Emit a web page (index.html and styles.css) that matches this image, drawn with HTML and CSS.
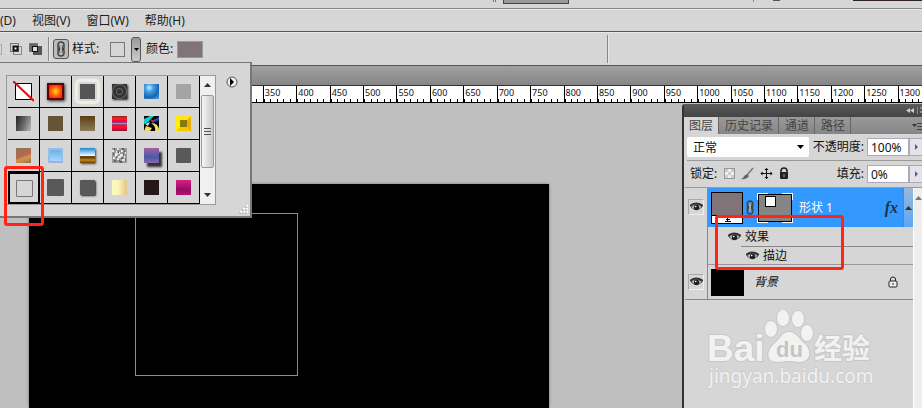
FILE: index.html
```html
<!DOCTYPE html>
<html lang="zh-CN">
<head>
  <meta charset="UTF-8">
  <meta name="viewport" content="width=device-width, initial-scale=1.0">
  <title>图层样式</title>
  <link rel="stylesheet" href="styles.css">
</head>
<body>
  <!-- shared icons -->
  <svg class="defs" aria-hidden="true">
    <symbol id="eye" viewBox="0 0 13 10">
      <path d="M1 5Q6 0 12 5Q6 10 1 5Z" fill="#ddd" stroke="#555"/>
      <path d="M0 4Q6-1 13 4" fill="none" stroke="#333" stroke-width="2"/>
      <circle cx="6.500" cy="5.500" r="2.800" fill="#222"/>
      <circle cx="5.700" cy="4.500" r=".8" fill="#fff"/>
    </symbol>
    <symbol id="chain" viewBox="0 0 8 16">
      <rect x="1" y="1" width="6" height="8" rx="3" fill="none" stroke="#444" stroke-width="1.500"/>
      <rect x="1" y="7" width="6" height="8" rx="3" fill="none" stroke="#444" stroke-width="1.500"/>
      <path d="M4 4v8" stroke="#333" stroke-width="3"/>
      <path d="M4 4v8" stroke="#ddd" stroke-width="1.500"/>
    </symbol>
  </svg>

  <header class="app-bar">
    <span class="app-grip"></span>
    <span class="app-tab"></span>
    <span class="app-line"></span>
    <span class="app-dot"></span>
    <span class="app-edge"></span>
  </header>

  <nav class="menu-bar">
    <button type="button">(D)</button>
    <button type="button">视图(V)</button>
    <button type="button">窗口(W)</button>
    <button type="button">帮助(H)</button>
  </nav>

  <div class="options-bar">
    <svg class="path-modes" viewBox="0 0 44 14">
      <path d="M0 2.500H1.500V12.500H0" fill="none" stroke="#aaa"/>
      <rect x="13.500" y="4.500" width="8" height="8" fill="none" stroke="#888"/>
      <rect x="10.500" y="1.500" width="8" height="8" fill="none" stroke="#777"/>
      <rect x="13.500" y="4.500" width="4" height="4" fill="#eee" stroke="#111" stroke-width="2"/>
      <rect x="33" y="4" width="9" height="9" fill="#555"/>
      <rect x="29.500" y="1.500" width="8" height="8" fill="#666" stroke="#777"/>
      <rect x="32.500" y="4.500" width="5" height="5" fill="#ddd" stroke="#111"/>
    </svg>
    <span class="divider"></span>
    <button type="button" class="link-btn" aria-label="链接"><svg width="8" height="16"><use href="#chain"/></svg></button>
    <span class="opt-label">样式:</span>
    <button type="button" class="style-preview" aria-label="样式"></button>
    <button type="button" class="style-arrow" aria-label="打开样式"><svg width="5" height="3"><path d="M0 0h5L2.500 3z"/></svg></button>
    <span class="opt-label">颜色:</span>
    <button type="button" class="color-preview" aria-label="颜色"></button>
    <span class="divider divider-far"></span>
  </div>

  <div class="doc-tabs"></div>
  <div class="ruler" id="ruler"></div>

  <main class="workspace">
    <div class="document"><div class="shape"></div></div>
  </main>

  <section class="style-popup">
    <div class="style-box">
      <div class="style-grid">
        <button type="button" aria-label="无"><svg class="none" viewBox="0 0 21 21"><rect x="2.500" y="2.500" width="16" height="16" fill="#fff" stroke="#000"/><path d="M0 0L21 20" stroke="#d11" stroke-width="2"/></svg></button>
        <button type="button" aria-label="样式"><i class="sw sun"></i></button>
        <button type="button" aria-label="样式"><i class="sw glow"></i></button>
        <button type="button" aria-label="样式"><i class="sw rings"></i></button>
        <button type="button" aria-label="样式"><i class="sw glass"></i></button>
        <button type="button" aria-label="样式"><i class="sw light"></i></button>
        <button type="button" aria-label="样式"><i class="sw smoke"></i></button>
        <button type="button" aria-label="样式"><i class="sw brown"></i></button>
        <button type="button" aria-label="样式"><i class="sw bronze"></i></button>
        <button type="button" aria-label="样式"><i class="sw stripes"></i></button>
        <button type="button" aria-label="样式"><svg class="paint" viewBox="0 0 15 15"><path d="M0 0h15v15H0z"/><path d="M0 3L6 0H10L3 7L0 8Z" fill="#1cc"/><path d="M7 5L15 1V4L9 7Z" fill="#24b"/><path d="M6 3L11 5L8 6Z" fill="#d22"/><path d="M7 7Q15 7 15 15H11Q12 10 7 7ZM2 10L8 12L6 15H0Z" fill="#ed6"/><path d="M1 8L6 6L4 10Z" fill="#cdd"/></svg></button>
        <button type="button" aria-label="样式"><i class="sw gold"></i></button>
        <button type="button" aria-label="样式"><i class="sw copper"></i></button>
        <button type="button" aria-label="样式"><i class="sw sky"></i></button>
        <button type="button" aria-label="样式"><i class="sw chrome"></i></button>
        <button type="button" aria-label="样式"><svg class="paint" viewBox="0 0 15 15"><path d="M0 0h15v15H0z" fill="#999"/><path d="M0 3h2M5 1h2M9 3h2M3 6h3M8 7h3M1 10h2M5 11h2M10 12h3M4 4h1M12 9h1M7 5h1M3 8h2M13 5h1M6 9h4" stroke="#fff" stroke-width="1.500"/><path d="M2 1h1M10 1h2M6 4h1M1 6h1M11 6h1M4 9h1M9 10h2M2 13h2M13 12h1M8 14h2M12 3h1M7 13h1" stroke="#222"/></svg></button>
        <button type="button" aria-label="样式"><i class="sw violet"></i></button>
        <button type="button" aria-label="样式"><i class="sw grey"></i></button>
        <button type="button" aria-label="描边" class="selected"><i class="sw outline"></i></button>
        <button type="button" aria-label="样式"><i class="sw grey big"></i></button>
        <button type="button" aria-label="样式"><i class="sw grey shadow"></i></button>
        <button type="button" aria-label="样式"><i class="sw cream"></i></button>
        <button type="button" aria-label="样式"><i class="sw dark"></i></button>
        <button type="button" aria-label="样式"><i class="sw magenta"></i></button>
      </div>
      <div class="scrollbar">
        <svg width="7" height="4"><path d="M0 4h7L3.500 0z" fill="#333"/></svg>
        <div class="thumb"><i></i><i></i><i></i></div>
        <svg width="7" height="4"><path d="M0 0h7L3.500 4z" fill="#333"/></svg>
      </div>
    </div>
    <button type="button" class="popup-menu" aria-label="菜单"><svg viewBox="0 0 12 12"><circle cx="6" cy="6" r="5" fill="#eee" stroke="#555"/><path d="M4 2l4 4-4 4z"/></svg></button>
    <svg class="resize-grip" viewBox="0 0 9 9"><path d="M7 1h2M4 4h2M7 4h2M1 7h2M4 7h2M7 7h2" stroke="#fff" stroke-width="2"/><path d="M6 2h2M3 5h2M6 5h2M0 8h2M3 8h2M6 8h2" stroke="#aaa"/></svg>
  </section>
  <div class="mark mark-style"></div>

  <aside class="layers-panel">
    <div class="panel-top"><svg width="16" height="7"><path d="M4 1v5L0 3.500zM8 1v5L4 3.500z" fill="#ccc"/><path d="M11.500 0v7" stroke="#888"/><path d="M14 1h2M14 5h2" stroke="#ccc"/></svg></div>
    <div class="panel-tabs">
      <button type="button" class="active">图层</button>
      <button type="button">历史记录</button>
      <button type="button">通道</button>
      <button type="button">路径</button>
      <svg class="tabs-menu" width="10" height="8"><path d="M0 2h5L2.500 5z" fill="#333"/><path d="M5 1.500h5M5 4.500h5M5 7.500h5" stroke="#444"/></svg>
    </div>
    <div class="panel-row blend-row">
      <div class="select-wrap">
        <select aria-label="混合模式"><option>正常</option></select>
        <svg width="7" height="4"><path d="M0 0h7L3.500 4z"/></svg>
      </div>
      <label for="opacity">不透明度:</label>
      <input id="opacity" type="text" value="100%">
      <button type="button" class="step" aria-label="不透明度滑块"><svg width="3" height="6"><path d="M0 0v6l3-3z" fill="#4a5f9a"/></svg></button>
    </div>
    <div class="panel-row lock-row">
      <span>锁定:</span>
      <svg class="lock-icons" viewBox="0 0 68 14">
        <rect x=".5" y="1.500" width="10" height="10" fill="#eee" stroke="#999"/>
        <path d="M1 2h3v3H1zM7 2h3v3H7zM4 5h3v3H4zM1 8h3v3H1zM7 8h3v3H7z" fill="#ccc"/>
        <path d="M29 1L23 8" stroke="#777" stroke-width="1.500"/>
        <path d="M23 7l2 2Q22 13 17 12Q20 11 20 9Z" fill="#666"/>
        <path d="M42.500 2v10M37 6.500h10" stroke="#111"/>
        <path d="M42.500 1l2 2h-4zM42.500 12l2-2h-4zM36.500 6.500l2-2v4zM48.500 6.500l-2-2v4z"/>
        <path d="M57 6V4a3 3 0 0 1 6 0v2" fill="none" stroke="#222" stroke-width="1.500"/>
        <rect x="56" y="5" width="8" height="7" rx="1" fill="#222"/>
        <path d="M60 7v3" stroke="#aaa"/>
      </svg>
      <label for="fill" class="fill-label">填充:</label>
      <input id="fill" type="text" value="0%">
      <button type="button" class="step" aria-label="填充滑块"><svg width="3" height="6"><path d="M0 0v6l3-3z" fill="#4a5f9a"/></svg></button>
    </div>

    <div class="layers">
      <div class="layer-list">
        <div class="layer layer-shape">
          <div class="eye-col"><button type="button" class="eye-btn" aria-label="可见"><svg width="13" height="10"><use href="#eye"/></svg></button></div>
          <div class="layer-body active">
            <div class="thumb-fill"><svg width="30" height="6"><path d="M13 4.500h6M14 2.500h4M15.500 0v4" stroke="#000"/></svg></div>
            <svg class="chain" width="8" height="15"><use href="#chain"/></svg>
            <svg class="thumb-mask" viewBox="0 0 36 30">
              <path d="M.5 7V.5H11M25 .5H35.500V7M35.500 23v6.500H25M11 29.500H.5V23" fill="none" stroke="#fff" stroke-width="2"/>
              <rect x="1.500" y="1.500" width="33" height="27" fill="#858585" stroke="#000"/>
              <rect x="8.500" y="3.500" width="10" height="10" fill="#fff" stroke="#000"/>
            </svg>
            <span class="layer-name">形状 1</span>
            <span class="fx">fx</span>
            <span class="fold"><svg width="7" height="4"><path d="M0 4h7L3.500 0z" fill="#333"/></svg></span>
          </div>
        </div>
        <div class="layer">
          <div class="eye-col"></div>
          <div class="effects">
            <div class="effect"><svg width="13" height="10"><use href="#eye"/></svg>效果</div>
            <div class="effect effect-sub"><svg width="13" height="10"><use href="#eye"/></svg>描边</div>
          </div>
        </div>
        <div class="layer layer-bg">
          <div class="eye-col"><button type="button" class="eye-btn" aria-label="可见"><svg width="13" height="10"><use href="#eye"/></svg></button></div>
          <div class="layer-body">
            <div class="thumb-black"></div>
            <em class="layer-name">背景</em>
            <svg class="lock" width="10" height="12" viewBox="0 0 10 12"><path d="M2.500 5V3a2.500 2 0 0 1 5 0v2" fill="none" stroke="#222"/><rect x="1" y="5" width="8" height="6" rx="1" fill="#eee" stroke="#222"/><path d="M5 7v2" stroke="#222"/></svg>
          </div>
        </div>
        <svg class="watermark" viewBox="0 0 180 86">
          <g class="wm-shape">
            <ellipse cx="71" cy="19" rx="6" ry="8"/>
            <ellipse cx="83" cy="8" rx="6" ry="8"/>
            <ellipse cx="98" cy="9" rx="6" ry="8"/>
            <ellipse cx="107" cy="23" rx="6" ry="8"/>
            <path d="M89 22C96 22 99 29 104 33C112 40 111 52 100 52C95 52 93 51 89 51C84 51 82 52 78 52C66 52 66 41 74 34C80 29 82 22 89 22Z"/>
          </g>
          <text class="wm-bai" x="7" y="51">Bai</text>
          <text class="wm-du" x="76" y="47">du</text>
          <text class="wm-cn" x="114" y="49">经验</text>
          <text class="wm-url" x="9" y="73">jingyan.baidu.com</text>
        </svg>
      </div>
      <div class="layer-scroll"><svg width="7" height="4"><path d="M0 4h7L3.500 0z" fill="#777"/></svg></div>
    </div>
  </aside>
  <div class="mark mark-effects"></div>

  <script>
    // ruler: one label every 50px of the document, five ticks per step
    const ruler = document.getElementById('ruler');
    for (let value = 0; value <= 1300; value += 50) {
      const step = document.createElement('div');
      step.className = 'ruler-step';
      step.innerHTML = '<span>' + value + '</span>' + '<i></i>'.repeat(5);
      ruler.appendChild(step);
    }
  </script>
</body>
</html>
```
FILE: styles.css
```css
:root {
  --panel: #d6d6d6;
  --line: #888;
  --mark: #ff2414;
}

* {
  box-sizing: border-box;
}

body {
  margin: 0;
  height: 100vh;
  display: flex;
  flex-direction: column;
  position: relative;
  overflow: hidden;
  background: var(--panel);
  color: #111;
  font-family: "Noto Sans", "Noto Sans CJK SC", sans-serif;
  font-size: 12px;
  line-height: 16px;
}

button, input, select {
  font: inherit;
  color: inherit;
  margin: 0;
  padding: 0;
  border: 0;
  background: none;
}

svg {
  display: block;
  flex: none;
}

.defs {
  position: absolute;
  width: 0;
  height: 0;
}

/* top bars */
.app-bar {
  display: flex;
  height: 9px;
  border-bottom: 1px solid var(--line);
}

.app-grip {
  width: 3px;
  height: 2px;
  margin-left: 493px;
  border: solid #777;
  border-width: 0 1px;
}

.app-tab {
  width: 66px;
  height: 4px;
  margin-left: 7px;
  background: #999;
  border: 1px solid #444;
  border-top: 0;
}

.app-line {
  width: 1px;
  height: 2px;
  margin-left: 184px;
  background: #888;
}

.app-dot {
  width: 7px;
  height: 1px;
  margin-left: 19px;
  background: #555;
}

.app-edge {
  flex: 1;
  height: 1px;
  margin-left: 73px;
  background: #322;
}

.menu-bar {
  display: flex;
  align-items: center;
  gap: 16px;
  height: 23px;
  border-top: 1px solid #e8e8e8;
  border-bottom: 1px solid #555;
  color: #222;
}

.options-bar {
  display: flex;
  align-items: center;
  height: 34px;
  border-top: 1px solid #e8e8e8;
  border-bottom: 1px solid #555;
}

.path-modes {
  width: 44px;
  height: 14px;
}

.divider {
  width: 2px;
  height: 24px;
  margin-left: 4px;
  border-left: 1px solid #888;
  border-right: 1px solid #e8e8e8;
}

.divider-far {
  height: 28px;
  margin-left: 404px;
}

.link-btn {
  display: flex;
  align-items: center;
  justify-content: center;
  width: 16px;
  height: 20px;
  margin: 0 3px;
  border: 1px solid #555;
  border-radius: 3px;
  background: #bbb;
}

.opt-label {
  width: 28px;
  white-space: nowrap;
}

.style-preview {
  width: 15px;
  height: 15px;
  margin: 0 6px 0 10px;
  border: 1px solid #777;
}

.style-arrow {
  display: flex;
  align-items: center;
  justify-content: center;
  width: 10px;
  height: 25px;
  margin-right: 5px;
  border: 1px solid #555;
  border-radius: 3px;
  background: linear-gradient(#999, #ccc);
}

.color-preview {
  width: 26px;
  height: 17px;
  margin-left: 3px;
  background: #807478;
  border: 1px solid #999;
}

.doc-tabs {
  height: 20px;
  background: linear-gradient(#a0a0a0, #868686);
  border-bottom: 1px solid #333;
}

/* the last step runs out of the window */
.ruler {
  display: flex;
  height: 17px;
  padding-left: 29px;
  margin-right: -9px;
  background: #fff;
  border-bottom: 1px solid #000;
}

.ruler-step {
  flex: 1 1 0;
  display: flex;
  align-items: flex-end;
  position: relative;
  min-width: 0;
  border-left: 1px solid #000;
}

.ruler-step span {
  position: absolute;
  left: 1px;
  top: 0;
  font-size: 9px;
  line-height: 13px;
}

.ruler-step i {
  flex: 1;
  height: 3px;
  border-left: 1px solid #000;
}

.workspace {
  flex: 1;
  display: flex;
  min-height: 0;
  padding: 81px 0 0 29px;
  background: #bfbfbf;
}

.document {
  width: 520px;
  padding: 29px 106px;
  background: #000;
  box-shadow: 0 0 3px #777;
}

.shape {
  width: 163px;
  height: 163px;
  border: 1px solid #8c8c8c;
}

/* style picker */
.style-popup {
  position: absolute;
  left: 0;
  top: 62px;
  display: flex;
  align-items: flex-start;
  padding: 12px 12px 11px 6px;
  background: var(--panel);
  border: solid #777;
  border-width: 1px 2px 2px 0;
}

.style-box {
  display: flex;
  border: 1px solid #999;
}

.style-grid {
  display: grid;
  grid-template-columns: repeat(6, 32px);
  grid-auto-rows: 32px;
  padding-left: 1px;
}

.style-grid button {
  display: flex;
  align-items: center;
  justify-content: center;
  border: solid #000;
  border-width: 0 1px 1px 0;
}

.style-grid .selected {
  border-width: 2px;
}

.sw {
  width: 15px;
  height: 15px;
}

.none {
  width: 21px;
  height: 21px;
}

.paint {
  width: 15px;
  height: 15px;
}

.sun {
  width: 17px;
  height: 17px;
  background: radial-gradient(#ffd51c, #ff4a08 60%, #e41c00);
  border: 2px solid #600;
  box-shadow: 1px 1px 3px #222;
}

.glow {
  width: 25px;
  height: 25px;
  border: 3px solid #eeeee6;
  border-radius: 5px;
  outline: 1px solid #e0e0d8;
  background: #555 content-box;
  padding: 2px;
}

.rings {
  background: repeating-radial-gradient(circle, #333 0 2px, #666 3px, #333 4px);
  box-shadow: 1px 1px 2px #222;
}

.glass {
  background: radial-gradient(circle at 35% 25%, #cef 0, #48a4e8 25%, #1864b0 65%, #5aa0dd);
}

.light {
  background: #a4a4a4;
}

.smoke {
  background: linear-gradient(110deg, #222, #666 50%, #bbb);
}

.brown {
  background: #665436;
}

.bronze {
  background: linear-gradient(#584015, #8d7b58);
}

.stripes {
  background: linear-gradient(#922 0, #f22 20%, #f04 30%, #638 40%, #e68 50%, #646 60%, #f13 70%, #d04 90%, #622);
}

.gold {
  background: #887a0c;
  border: 4px solid #f7d60d;
  border-color: #ffe516 #eeb000 #f5c800 #fff000;
}

.copper {
  background: linear-gradient(160deg, #927060, #b66a4a 50%, #d49550 65%, #8e7144);
}

.sky {
  background: linear-gradient(#6bb0e4, #a8d8ff);
  border: 2px solid #96bfe8;
  border-bottom-color: #a9a9e0;
}

.chrome {
  background: linear-gradient(#1e86d0, #e8fbff 50%, #4a2800 58%, #c48519 80%, #6b3d06);
  box-shadow: 1px 1px 2px #444;
}

.violet {
  background: linear-gradient(#a260a0, #4a5aa8 60%, #8b65ad);
  box-shadow: 3px 4px 2px #333;
}

.grey {
  background: #595959;
  border-radius: 1px;
}

.big {
  width: 17px;
  height: 17px;
}

.shadow {
  box-shadow: 1px 1px 2px #222;
}

.outline {
  width: 17px;
  height: 17px;
  border: 1px solid #777;
  border-radius: 1px;
}

.cream {
  background: linear-gradient(to right, #fcf7ba 40%, #dfc681);
}

.dark {
  background: #251819;
}

.magenta {
  background: linear-gradient(#d91f83, #930c61 65%, #b51371);
}

.scrollbar {
  display: flex;
  flex-direction: column;
  align-items: center;
  width: 15px;
  padding: 7px 1px;
  background: #f0f0f0;
}

.scrollbar .thumb {
  display: flex;
  flex-direction: column;
  align-items: center;
  justify-content: center;
  gap: 2px;
  width: 13px;
  height: 73px;
  margin: 8px 0 auto;
  border: 1px solid #999;
  border-radius: 2px;
  background: linear-gradient(to right, #f6f6f6, #c8c8cc);
}

.scrollbar .thumb i {
  width: 7px;
  height: 1px;
  background: #555;
}

.popup-menu {
  width: 12px;
  height: 12px;
  margin: 1px 0 0 10px;
}

.resize-grip {
  position: absolute;
  right: 2px;
  bottom: 2px;
  width: 9px;
  height: 9px;
}

.mark {
  position: absolute;
  border: 3px solid var(--mark);
  border-radius: 3px;
}

.mark-style {
  left: 4px;
  top: 166px;
  width: 40px;
  height: 60px;
}

.mark-effects {
  right: 78px;
  top: 215px;
  width: 129px;
  height: 55px;
}

/* layers panel */
.layers-panel {
  position: absolute;
  top: 104px;
  right: 0;
  bottom: 0;
  display: flex;
  flex-direction: column;
  width: 240px;
  border-left: 2px solid #333;
  border-top-left-radius: 3px;
  background: var(--panel);
}

.panel-top {
  display: flex;
  align-items: center;
  justify-content: flex-end;
  height: 13px;
  background: linear-gradient(#5a5a5a, #444);
}

.panel-tabs {
  display: flex;
  height: 17px;
  background: linear-gradient(#999, #868686);
}

.panel-tabs button {
  padding: 0 5px 0 6px;
  line-height: 17px;
  color: #444;
  border-right: 1px solid #666;
}

.panel-tabs .active {
  padding: 0 5px;
  background: var(--panel);
}

.tabs-menu {
  margin: 5px 0 0 auto;
}

.panel-row {
  display: flex;
  align-items: center;
  height: 27px;
  margin-left: 3px;
}

.blend-row {
  border-bottom: 1px solid #999;
}

.select-wrap {
  display: flex;
  align-items: center;
  flex: 1;
  height: 20px;
  margin-right: 4px;
  padding-right: 5px;
  background: #fff;
  border-radius: 2px;
}

.select-wrap select {
  flex: 1;
  appearance: none;
  padding: 2px 0 0 6px;
}

.panel-row input {
  width: 42px;
  height: 18px;
  margin-left: 3px;
  padding-left: 3px;
  background: #fff;
  border: 1px solid #aab;
}

.step {
  display: flex;
  align-items: center;
  justify-content: center;
  width: 13px;
  height: 18px;
  border: 1px solid #aab;
  border-right: 0;
  background: #e4e4e8;
}

.lock-row {
  height: 26px;
  padding-left: 3px;
}

.lock-icons {
  width: 68px;
  height: 14px;
  margin-left: 7px;
}

.fill-label {
  margin-left: auto;
}

.layers {
  flex: 1;
  display: flex;
  min-height: 0;
  margin-left: 1px;
  border-top: 1px solid #999;
}

.layer-list {
  flex: 1;
  min-width: 0;
}

.layer-scroll {
  display: flex;
  justify-content: center;
  width: 9px;
  padding-top: 8px;
  background: #eee;
  border-left: 1px solid #fff;
}

.layer {
  display: flex;
}

.eye-col {
  width: 23px;
  border-right: 1px solid #888;
}

.eye-btn {
  display: flex;
  align-items: center;
  justify-content: center;
  width: 16px;
  height: 16px;
  margin: 11px 0 0 3px;
  border: 1px solid #aaa;
  border-bottom-color: #eee;
  border-right-color: #eee;
}

.layer-body {
  flex: 1;
  display: flex;
  align-items: center;
  padding-left: 3px;
}

.layer-body.active {
  background: #3399ff;
  color: #fff;
}

.layer-shape {
  height: 39px;
}

.thumb-fill {
  display: flex;
  flex-direction: column;
  justify-content: flex-end;
  width: 32px;
  height: 32px;
  border: 1px solid #000;
  background: linear-gradient(#807478 22px, #000 22px 23px, #fff 23px);
}

.chain {
  margin: 0 3px;
}

.thumb-mask {
  width: 36px;
  height: 30px;
}

.layer-name {
  margin-left: 6px;
}

.fx {
  margin: 0 5px 0 auto;
  color: #234;
  font-family: "Liberation Serif", serif;
  font-size: 16px;
  font-style: italic;
  font-weight: bold;
}

.fold {
  display: flex;
  align-items: center;
  justify-content: center;
  align-self: stretch;
  width: 10px;
  border-left: 1px solid #58a;
  background: linear-gradient(#9ab8d8, #5aa7f4);
}

.effects {
  flex: 1;
  border-bottom: 1px solid #999;
}

.effect {
  display: flex;
  align-items: center;
  gap: 4px;
  height: 19px;
  padding-left: 20px;
}

.effect-sub {
  height: 18px;
  margin-left: 33px;
  padding-left: 5px;
  border-top: 1px solid #888;
}

.layer-bg {
  height: 35px;
  border-bottom: 1px solid #888;
}

.layer-bg .eye-btn {
  margin-top: 9px;
}

.thumb-black {
  width: 33px;
  height: 27px;
  background: #000;
}

.layer-bg .layer-name {
  margin-left: 10px;
}

.lock {
  margin: 0 15px 0 auto;
}

.watermark {
  width: 180px;
  height: 86px;
  margin: 10px 0 0 15px;
}

.wm-shape, .watermark text {
  fill: #f2f2f2;
  stroke: #c8c8c8;
  stroke-width: 2px;
  paint-order: stroke;
}

.watermark .wm-bai {
  font: bold 37px "Liberation Sans", sans-serif;
}

.watermark .wm-du {
  fill: #c4c4c4;
  stroke: none;
  font: bold 22px "Liberation Sans", sans-serif;
}

.watermark .wm-cn {
  font: bold 28px "Noto Sans CJK SC", sans-serif;
}

.watermark .wm-url {
  stroke-width: 1px;
  font: 19px "Noto Sans", sans-serif;
}
```
